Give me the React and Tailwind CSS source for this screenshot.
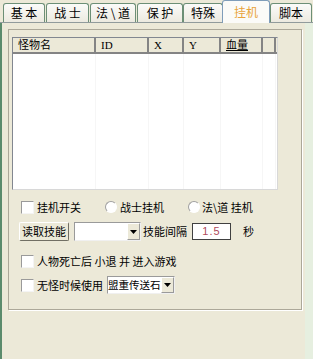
import React from 'react';

const tabs = [
  { label: '基 本', w: 'w-[42px]', m: 'ml-[3px]' },
  { label: '战 士', w: 'w-[43px]', m: 'ml-[1px]' },
  { label: '法 \\ 道', w: 'w-[46px]', m: 'ml-[1px]' },
  { label: '保 护', w: 'w-[46px]', m: 'ml-[1px]' },
  { label: '特殊', w: 'w-[40px]', m: 'ml-0' },
  { label: '挂机', w: 'w-[48px]', m: '-ml-[1px]', active: true },
  { label: '脚本', w: 'w-[42px]', m: 'ml-0' },
];

const cols = [
  { name: '怪物名', w: 'w-[83px]' },
  { name: 'ID', w: 'w-[53px]' },
  { name: 'X', w: 'w-[35px]' },
  { name: 'Y', w: 'w-[37px]' },
  { name: '血量', w: 'w-[42px]', underline: true },
  { name: '', w: 'w-[13px]' },
];

const Check = () => (
  <span className="inline-block w-[13px] h-[13px] bg-white border border-t-[#9a9a9a] border-l-[#9a9a9a] border-r-[#f4f4f4] border-b-[#f4f4f4] shrink-0" />
);

const Radio = () => (
  <span className="inline-block w-[12px] h-[12px] rounded-full bg-white border border-t-[#a0a0a0] border-l-[#a0a0a0] border-r-white border-b-white shrink-0" />
);

const Arrow = () => (
  <span className="flex items-center justify-center w-[13px] h-full bg-[#ece9d8] border border-t-white border-l-white border-r-[#9a9a9a] border-b-[#9a9a9a] shrink-0">
    <svg width="7" height="4" viewBox="0 0 7 4"><path d="M0 0h7L3.5 4z" fill="#000" /></svg>
  </span>
);

export default function App() {
  return (
    <div className="w-[313px] h-[359px] bg-[#ece9d8] flex flex-col text-[11px] leading-none text-black font-['Noto_Sans_CJK_SC',sans-serif] overflow-hidden">
      <div className="flex items-end h-[22px] shrink-0">
        {tabs.map((t) =>
          t.active ? (
            <div
              key={t.label}
              className={`${t.w} ${t.m} h-[23px] -mb-px z-10 flex items-center justify-center rounded-t-[3px] border border-b-0 border-[#7f9db9] bg-[#fbfbf8] text-[12px] text-[#e8a33c]`}
            >
              {t.label}
            </div>
          ) : (
            <div
              key={t.label}
              className={`${t.w} ${t.m} h-[19px] flex items-center justify-center rounded-t-[3px] border border-b-0 border-[#6c8f76] bg-gradient-to-b from-[#fbfbf9] to-[#eceae0] text-[12px] whitespace-pre`}
            >
              {t.label}
            </div>
          )
        )}
      </div>
      <div className="flex-1 flex bg-[#e4eedf] border-t border-[#919b9c]">
        <div className="flex-1 flex flex-col border-l-2 border-[#5b8b6c] bg-[#ece9d8] pl-[6px] pt-[6px] pr-[1px]">
          <div className="w-[294px] h-[281px] border border-[#aca899] shadow-[1px_1px_0_#ffffff] pl-[3px] pt-[7px]">
            <div className="w-[266px] h-[153px] border border-t-[#828790] border-l-[#828790] border-r-[#d8d8d8] border-b-[#d8d8d8] bg-white flex flex-col">
              <div className="flex h-[16px] bg-[#ece9d8] border-b-2 border-[#848484] shrink-0">
                {cols.map((c, i) => (
                  <div
                    key={i}
                    className={`${c.w} h-full flex items-center pl-[5px] border-r-2 border-[#848484] font-['Liberation_Serif','Noto_Sans_CJK_SC',serif] ${c.underline ? 'underline' : ''}`}
                  >
                    {c.name}
                  </div>
                ))}
              </div>
              <div className="flex-1 flex">
                {cols.map((c, i) => (
                  <div key={i} className={`${c.w} h-full border-r border-[#f6f6f6]`} />
                ))}
              </div>
            </div>

            <div className="flex items-center h-[14px] mt-[10px] pl-[9px]">
              <Check />
              <span className="ml-[3px] w-[68px]">挂机开关</span>
              <Radio />
              <span className="ml-[3px] w-[68px]">战士挂机</span>
              <Radio />
              <span className="ml-[2px]">法\道 挂机</span>
            </div>

            <div className="flex items-center h-[19px] mt-[8px] pl-[7px]">
              <div className="w-[50px] h-[19px] flex items-center justify-center bg-[#ece9d8] border border-t-white border-l-white border-r-[#716f64] border-b-[#716f64] rounded-[2px]">
                读取技能
              </div>
              <div className="ml-[5px] w-[67px] h-[19px] flex border border-t-[#9a9a9a] border-l-[#9a9a9a] border-r-[#f0f0f0] border-b-[#f0f0f0] bg-white">
                <span className="flex-1" />
                <Arrow />
              </div>
              <span className="ml-[2px] w-[46px]">技能间隔</span>
              <div className="ml-[3px] w-[39px] h-[17px] flex items-center justify-center bg-white border border-[#404040] text-[#b04a5a] text-[11px] tracking-[1px] font-['Liberation_Sans',sans-serif]">
                1.5
              </div>
              <span className="ml-[12px]">秒</span>
            </div>

            <div className="flex items-center h-[14px] mt-[13px] pl-[9px]">
              <Check />
              <span className="ml-[3px] whitespace-pre">人物死亡后 小退 并 进入游戏</span>
            </div>

            <div className="flex items-center h-[18px] mt-[8px] pl-[9px]">
              <Check />
              <span className="ml-[3px]">无怪时候使用</span>
              <div className="ml-[4px] w-[68px] h-[18px] flex border border-t-[#9a9a9a] border-l-[#9a9a9a] border-r-[#f0f0f0] border-b-[#f0f0f0] bg-white overflow-hidden">
                <span className="flex-1 overflow-hidden whitespace-nowrap text-[10.5px] flex items-center">盟重传送石</span>
                <Arrow />
              </div>
            </div>
          </div>
        </div>
        <div className="w-[8px] bg-[#e6efe0]" />
      </div>
    </div>
  );
}
